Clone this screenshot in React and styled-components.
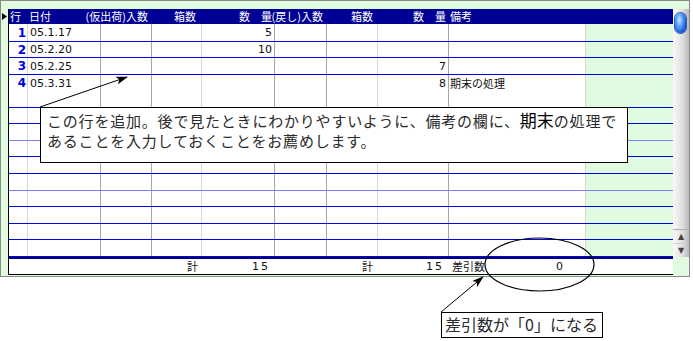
import React from "react";
import styled, { createGlobalStyle } from "styled-components";

const GlobalStyle = createGlobalStyle`
    html, body {
        margin: 0;
        padding: 0;
        background: #ffffff;
    }
`

const COLS = "19px 73px 51px 50px 73px 52px 51px 71px 137px 87px";
const DIVIDERS = ["light", "dark", "dark", "light", "dark", "dark", "light", "dark", "light", "none"];
const ROW_HEIGHTS = [18, 16, 17, 16, 17, 16, 17, 16, 17, 17, 16, 17, 16, 17];
const LIGHT_LINES = [6, 9];

const rows = [
    { n: 1, date: "05.1.17", cells: { 4: "5" } },
    { n: 2, date: "05.2.20", cells: { 4: "10" } },
    { n: 3, date: "05.2.25", cells: { 7: "7" } },
    { n: 4, date: "05.3.31", cells: { 7: "8", 8: "期末の処理" } },
];

const Page = styled.div`
    position: relative;
    width: 693px;
    height: 341px;
    background: #ffffff;
    font-family: "DejaVu Sans", "Noto Sans CJK JP", sans-serif;
`

const Frame = styled.div`
    box-sizing: border-box;
    width: 690px;
    height: 277px;
    border: 1px solid #8a8a8a;
    background: #e0fbe0;
    padding: 8px 0 1px 0;
    display: flex;
    align-items: flex-start;
`

const Marker = styled.div`
    width: 7px;
    flex: none;
    padding-top: 4px;
    display: flex;
    justify-content: flex-start;
    padding-left: 1px;
    box-sizing: border-box;
`

const Main = styled.div`
    display: flex;
    flex-direction: column;
`

const TopRow = styled.div`
    display: flex;
    align-items: stretch;
`

const Sheet = styled.div`
    width: 665px;
    box-sizing: border-box;
    border-left: 1px solid #000;
    background: #fff;
`

const Header = styled.div`
    display: grid;
    grid-template-columns: ${COLS};
    height: 15px;
    background: #000094;
    color: #fff;
    font-family: "Noto Sans CJK JP", sans-serif;
    font-size: 11px;
    line-height: 15px;
`

const HeadCell = styled.div`
    display: flex;
    justify-content: ${p => (p.$right ? "flex-end" : "flex-start")};
    padding-left: ${p => p.$pl || 0}px;
    padding-right: ${p => p.$pr || 0}px;
    white-space: nowrap;
    min-width: 0;
`

const Row = styled.div`
    display: grid;
    grid-template-columns: ${COLS};
    height: ${p => p.$h}px;
    box-sizing: border-box;
    border-bottom: 1px solid ${p => (p.$light ? "#8080ff" : "#0000e8")};
`

const Cell = styled.div`
    box-sizing: border-box;
    border-right: 1px solid ${p =>
        p.$div === "dark" ? "#a6a6a6" : p.$div === "light" ? "#d6d6d6" : "transparent"};
    background: ${p => (p.$green ? "#e0fbe0" : "#fff")};
    display: flex;
    align-items: center;
    justify-content: ${p => (p.$right ? "flex-end" : "flex-start")};
    padding: 0 ${p => p.$pr || 0}px 0 ${p => p.$pl || 0}px;
    font-size: 11px;
    color: #111;
    white-space: nowrap;
`

const RowNo = styled.span`
    color: #0000e6;
    font-weight: bold;
    font-size: 12px;
`

const Remark = styled.span`
    font-family: "Noto Sans CJK JP", sans-serif;
    font-size: 11px;
`

const ScrollBar = styled.div`
    width: 16px;
    box-sizing: border-box;
    display: flex;
    flex-direction: column;
    background: linear-gradient(to right, #fafafa, #dedede 60%, #b9b9b9);
`

const Track = styled.div`
    flex: 1;
    padding: 4px 0 0 2px;
    border-bottom-left-radius: 7px;
    border-bottom-right-radius: 7px;
`

const Thumb = styled.div`
    width: 11px;
    height: 20px;
    border-radius: 6px;
    background: radial-gradient(ellipse at 40% 35%, #cfe6ff 0%, #5aa0ff 35%, #1652c8 75%, #0a3a9c 100%);
    box-shadow: 0 0 0 1px #2a5fb8;
`

const ArrowBtn = styled.div`
    height: 13px;
    display: flex;
    align-items: center;
    justify-content: center;
    font-size: 8px;
    color: #444;
    border-top: 1px solid ${p => (p.$first ? "#b0b0b0" : "#d0d0d0")};
    font-family: "DejaVu Sans", sans-serif;
`

const Footer = styled.div`
    width: 665px;
    box-sizing: border-box;
    height: 18px;
    display: grid;
    grid-template-columns: ${COLS};
    background: #fff;
    border-left: 1px solid #000;
    border-top: 2px solid #000070;
    border-bottom: 1px solid #000;
    font-size: 11px;
    line-height: 15px;
    color: #111;
`

const FootCell = styled.div`
    display: flex;
    justify-content: ${p => (p.$right ? "flex-end" : "flex-start")};
    padding: 0 ${p => p.$pr || 0}px 0 ${p => p.$pl || 0}px;
    white-space: nowrap;
    font-family: "Noto Sans CJK JP", "DejaVu Sans", sans-serif;
`

const FootNum = styled.span`
    font-family: "DejaVu Sans", sans-serif;
    letter-spacing: 2px;
`

const Zero = styled.span`
    font-family: "DejaVu Sans", sans-serif;
    margin-left: 71px;
`

const Callout = styled.div`
    position: absolute;
    left: ${p => p.$x}px;
    top: ${p => p.$y}px;
    width: ${p => p.$w}px;
    height: ${p => p.$h}px;
    box-sizing: border-box;
    border: 1px solid #000;
    background: #fff;
    color: #2a2a2a;
    font-family: "Noto Sans CJK JP", sans-serif;
    white-space: nowrap;
`

const NoteText = styled.div`
    padding: 2px 0 0 6px;
    font-size: 15px;
    line-height: 20px;
    letter-spacing: 0.8px;
`

const Big = styled.span`
    font-size: 17px;
    color: #000;
    letter-spacing: 0;
`

const SmallNote = styled.div`
    padding: 0 0 0 3px;
    font-size: 16px;
    line-height: 23px;
`

const Overlay = styled.svg`
    position: absolute;
    left: 0;
    top: 0;
    pointer-events: none;
`

function App() {
    const blank = ROW_HEIGHTS.map((h, i) => rows[i] || null);

    return (
        <Page>
            <GlobalStyle />
            <Frame>
                <Marker>
                    <svg width="5" height="7" viewBox="0 0 5 7">
                        <polygon points="0,0 5,3.5 0,7" fill="#000" />
                    </svg>
                </Marker>
                <Main>
                    <TopRow>
                        <Sheet>
                            <Header>
                                <HeadCell $pl={1}>行</HeadCell>
                                <HeadCell $pl={1}>日付</HeadCell>
                                <HeadCell $right $pr={4}>(仮出荷)入数</HeadCell>
                                <HeadCell $right $pr={6}>箱数</HeadCell>
                                <HeadCell $right $pr={3}>数　量</HeadCell>
                                <HeadCell $right $pr={4}>(戻し)入数</HeadCell>
                                <HeadCell $right $pr={5}>箱数</HeadCell>
                                <HeadCell $right $pr={3}>数　量</HeadCell>
                                <HeadCell $pl={1}>備考</HeadCell>
                                <HeadCell />
                            </Header>
                            {blank.map((r, i) => (
                                <Row key={i} $h={ROW_HEIGHTS[i]} $light={LIGHT_LINES.includes(i)}>
                                    {DIVIDERS.map((d, c) => {
                                        let content = null;
                                        let props = {};
                                        if (r && c === 0) {
                                            content = <RowNo>{r.n}</RowNo>;
                                            props = { $right: true, $pr: 1 };
                                        } else if (r && c === 1) {
                                            content = r.date;
                                            props = { $pl: 2 };
                                        } else if (r && r.cells[c]) {
                                            if (c === 8) {
                                                content = <Remark>{r.cells[c]}</Remark>;
                                                props = { $pl: 1 };
                                            } else {
                                                content = r.cells[c];
                                                props = { $right: true, $pr: 2 };
                                            }
                                        }
                                        return (
                                            <Cell key={c} $div={d} $green={c === 9} {...props}>
                                                {content}
                                            </Cell>
                                        );
                                    })}
                                </Row>
                            ))}
                        </Sheet>
                        <ScrollBar>
                            <Track>
                                <Thumb />
                            </Track>
                            <ArrowBtn $first>▲</ArrowBtn>
                            <ArrowBtn>▼</ArrowBtn>
                        </ScrollBar>
                    </TopRow>
                    <Footer>
                        <FootCell />
                        <FootCell />
                        <FootCell />
                        <FootCell $right $pr={4}>計</FootCell>
                        <FootCell $right $pr={5}><FootNum>15</FootNum></FootCell>
                        <FootCell />
                        <FootCell $right $pr={5}>計</FootCell>
                        <FootCell $right $pr={5}><FootNum>15</FootNum></FootCell>
                        <FootCell $pl={3}>差引数<Zero>0</Zero></FootCell>
                        <FootCell />
                    </Footer>
                </Main>
            </Frame>

            <Callout $x={40} $y={107} $w={588} $h={56}>
                <NoteText>
                    この行を追加。後で見たときにわかりやすいように、備考の欄に、<Big>期末</Big>の処理で
                    <br />
                    あることを入力しておくことをお薦めします。
                </NoteText>
            </Callout>

            <Callout $x={441} $y={312} $w={162} $h={26}>
                <SmallNote>差引数が「0」になる</SmallNote>
            </Callout>

            <Overlay width="693" height="341" viewBox="0 0 693 341">
                <defs>
                    <marker id="head" markerWidth="12" markerHeight="8" refX="11" refY="4" orient="auto" markerUnits="userSpaceOnUse">
                        <polygon points="0,0 12,4 0,8 3,4" fill="#000" />
                    </marker>
                </defs>
                <line x1="40" y1="107" x2="127" y2="77" stroke="#000" strokeWidth="1" markerEnd="url(#head)" />
                <line x1="441" y1="312" x2="483" y2="277" stroke="#000" strokeWidth="1" markerEnd="url(#head)" />
                <ellipse cx="539.5" cy="264.5" rx="54.5" ry="26.5" fill="none" stroke="#000" strokeWidth="1.2" />
            </Overlay>
        </Page>
    );
}

export default App;
